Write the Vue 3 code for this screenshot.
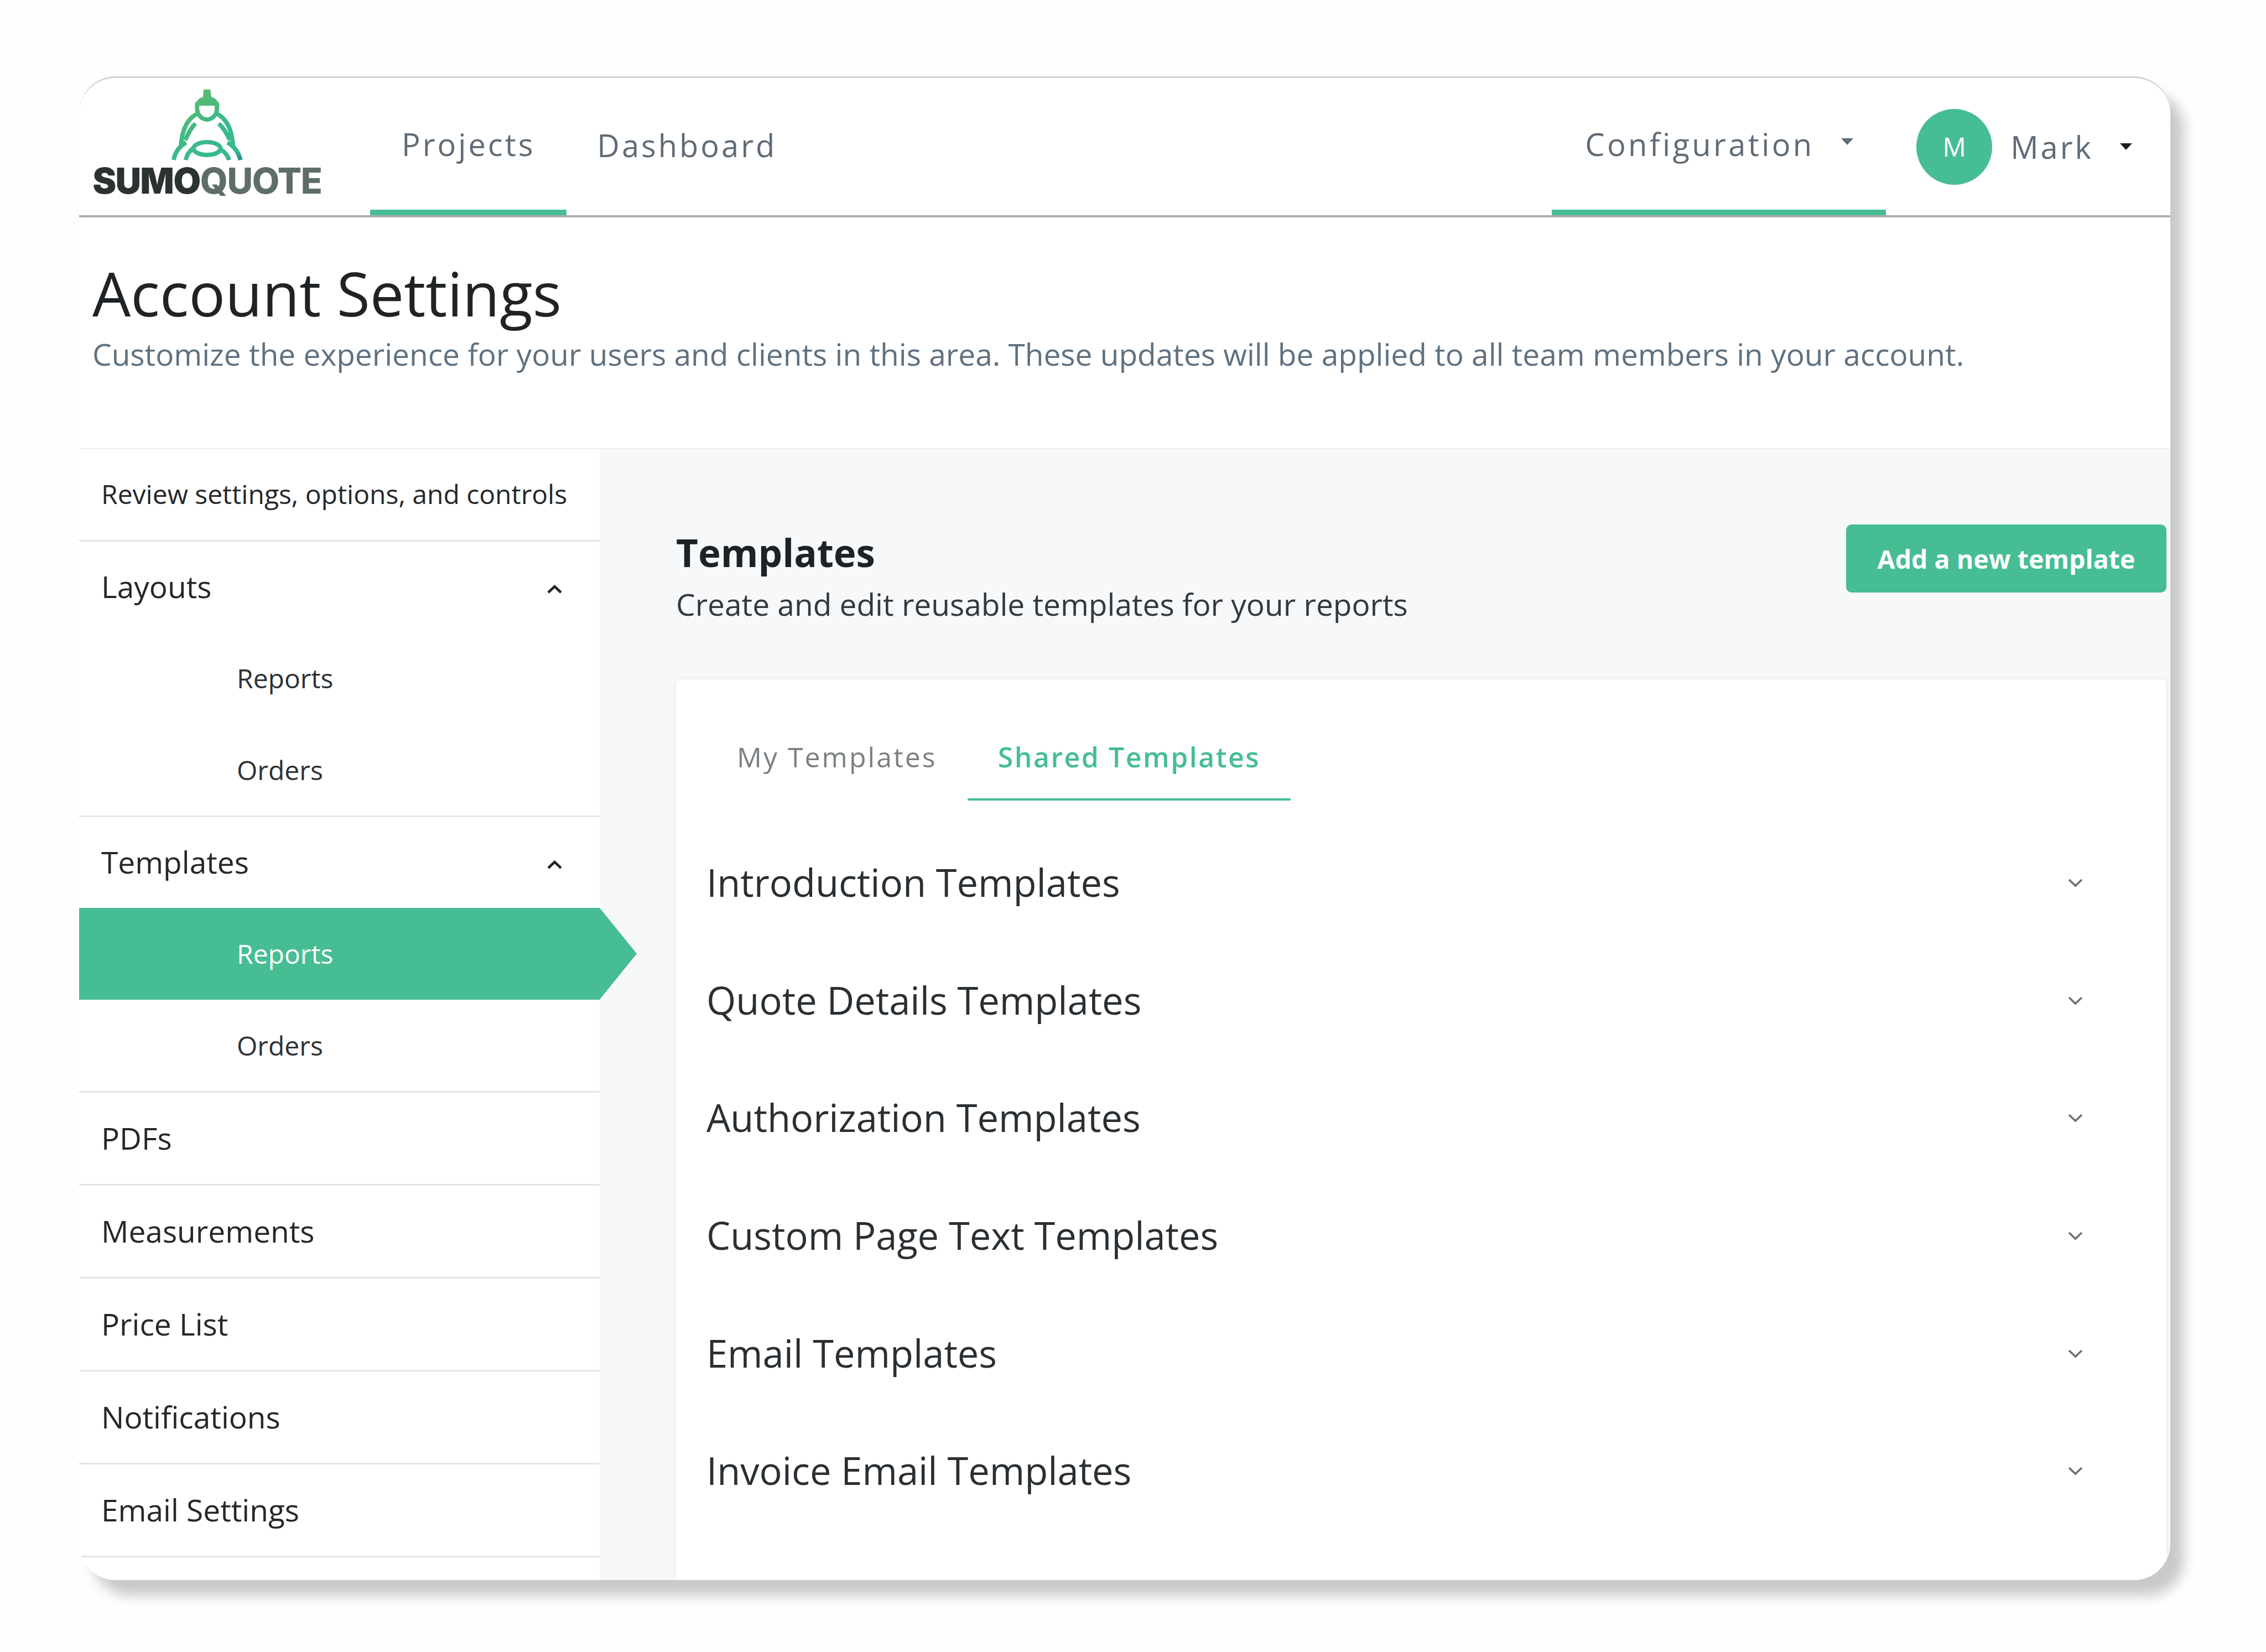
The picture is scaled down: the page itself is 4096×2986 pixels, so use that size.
<script setup>
const layouts = ['Reports', 'Orders']
const templates = [
  { label: 'Reports', active: true },
  { label: 'Orders', active: false },
]
const plainLinks = ['PDFs', 'Measurements', 'Price List', 'Notifications', 'Email Settings']
const accordions = [
  'Introduction Templates',
  'Quote Details Templates',
  'Authorization Templates',
  'Custom Page Text Templates',
  'Email Templates',
  'Invoice Email Templates',
]
</script>

<template>
  <div class="page">
    <div class="window">
      <!-- TOP NAV -->
      <header class="topbar">
        <div class="logo">
          <svg class="logo-mark" viewBox="0 0 215 215" fill="none" stroke="url(#sumo)" stroke-width="13" stroke-linecap="round">
            <defs>
              <linearGradient id="sumo" gradientUnits="userSpaceOnUse" x1="60" y1="0" x2="200" y2="215">
                <stop offset="0" stop-color="#62bc68" />
                <stop offset="0.45" stop-color="#3dba88" />
                <stop offset="0.9" stop-color="#34b98f" />
                <stop offset="1" stop-color="#1f8f8c" />
              </linearGradient>
            </defs>
            <path d="M97 3h20l3 22q20 6 23 26H72q3-20 23-26z" fill="url(#sumo)" stroke="none" />
            <path d="M78 45q-2 22 4 32q10 15 25 15t25-15q6-10 4-32" />
            <path d="M72 78Q36 100 30 165" />
            <path d="M142 78Q178 100 184 165" />
            <path d="M69 108Q56 122 45 148" />
            <path d="M146 108Q160 122 172 148" />
            <ellipse cx="107" cy="178" rx="40" ry="19" />
            <path d="M45 160Q14 178 8 212" stroke-linecap="butt" />
            <path d="M68 175Q48 190 44 212" stroke-linecap="butt" />
            <path d="M168 160Q198 178 206 212" stroke-linecap="butt" />
            <path d="M150 182Q168 195 172 212" stroke-linecap="butt" />
          </svg>
          <div class="logo-text"><span class="sumo">SUMO</span><span class="quote">QUOTE</span></div>
        </div>

        <nav class="nav-left">
          <a class="nav-tab active">Projects</a>
          <a class="nav-tab">Dashboard</a>
        </nav>

        <div class="nav-right">
          <a class="nav-tab active config">Configuration<i class="caret"></i></a>
          <div class="avatar">M</div>
          <span class="user-name">Mark</span>
          <i class="caret dark"></i>
        </div>
      </header>

      <!-- PAGE TITLE -->
      <section class="intro">
        <h1>Account Settings</h1>
        <p>Customize the experience for your users and clients in this area. These updates will be applied to all team members in your account.</p>
      </section>

      <div class="body">
        <!-- SIDEBAR -->
        <aside class="sidebar">
          <div class="side-row small lined">Review settings, options, and controls</div>

          <div class="side-group">
            <div class="side-row">Layouts
              <svg class="chev up" viewBox="0 0 27 16"><path d="M2 14 13.500 3 25 14" /></svg>
            </div>
            <div v-for="item in layouts" :key="item" class="side-sub">{{ item }}</div>
          </div>

          <div class="side-group">
            <div class="side-row">Templates
              <svg class="chev up" viewBox="0 0 27 16"><path d="M2 14 13.500 3 25 14" /></svg>
            </div>
            <div v-for="item in templates" :key="item.label" class="side-sub" :class="{ current: item.active }">{{ item.label }}</div>
          </div>

          <div v-for="item in plainLinks" :key="item" class="side-row lined">{{ item }}</div>
        </aside>

        <!-- MAIN -->
        <main class="main">
          <div class="main-head">
            <div>
              <h2>Templates</h2>
              <p>Create and edit reusable templates for your reports</p>
            </div>
            <button class="add-btn">Add a new template</button>
          </div>

          <div class="card">
            <div class="tabs">
              <div class="tab">My Templates</div>
              <div class="tab selected">Shared Templates</div>
            </div>
            <div class="accordion">
              <div v-for="item in accordions" :key="item" class="acc-row">
                <span>{{ item }}</span>
                <svg class="chev down" viewBox="0 0 27 16"><path d="M2 2 13.500 13 25 2" /></svg>
              </div>
            </div>
          </div>
        </main>
      </div>
    </div>
  </div>
</template>

<style>
html, body {
  margin: 0;
  background: #fefefe;
}
</style>

<style scoped>
* {
  box-sizing: border-box;
}

.page {
  width: 4096px;
  height: 2986px;
  padding: 138px 0 0 143px;
  overflow: hidden;
  font-family: "Open Sans", "Liberation Sans", sans-serif;
  color: #24282b;
}

.window {
  width: 3780px;
  height: 2718px;
  display: flex;
  flex-direction: column;
  background: #fff;
  border-top: 3px solid #d2d2d2;
  border-radius: 66px;
  overflow: hidden;
  box-shadow: 25px 28px 22px #c8cac9;
}

/* TOP NAV */

.topbar {
  height: 252px;
  flex: none;
  display: flex;
  border-bottom: 4px solid #adadad;
}

.logo {
  width: 415px;
  margin-left: 24px;
  padding-top: 19px;
  display: flex;
  flex-direction: column;
  align-items: center;
}

.logo-mark {
  width: 131px;
  height: 131px;
  flex: none;
}

.logo-text {
  margin-top: 6px;
  font-family: Inter, "Liberation Sans", sans-serif;
  font-size: 64px;
  line-height: 60px;
  letter-spacing: -1.300px;
  white-space: nowrap;
}

.sumo {
  font-weight: 900;
  color: #2a3330;
}

.quote {
  font-weight: 800;
  color: #5f6d68;
}

.nav-left {
  margin-left: 87px;
  display: flex;
}

.nav-tab {
  padding: 0 57px;
  display: flex;
  align-items: center;
  font-size: 56px;
  letter-spacing: 4px;
  color: #5f6b76;
  white-space: nowrap;
  border-bottom: 10px solid transparent;
}

.nav-tab + .nav-tab {
  padding: 4px 57px 0 55px;
}

.nav-tab.active {
  border-bottom-color: #47bd93;
}

.nav-right {
  margin-left: auto;
  display: flex;
  align-items: center;
}

.nav-tab.config {
  align-self: stretch;
  width: 604px;
  padding: 0 0 0 60px;
  letter-spacing: 4.400px;
}

.caret {
  margin-left: 48px;
  margin-top: -8px;
  border-top: 12px solid #5f6b76;
  border-left: 11px solid transparent;
  border-right: 11px solid transparent;
}

.caret.dark {
  margin: 0 69px 0 48px;
  border-top-color: #1d1d1d;
}

.avatar {
  width: 137px;
  height: 137px;
  margin-left: 55px;
  border-radius: 50%;
  background: #47bd93;
  color: #fff;
  font-size: 47px;
  display: flex;
  align-items: center;
  justify-content: center;
}

.user-name {
  margin-left: 33px;
  font-size: 56px;
  letter-spacing: 4px;
  color: #5f6b76;
}

/* PAGE TITLE */

.intro {
  height: 419px;
  flex: none;
  padding: 72px 0 0 24px;
  border-bottom: 2px solid #eceef0;
}

.intro h1 {
  margin: 0;
  font-size: 109.500px;
  line-height: 130px;
  font-weight: 400;
  color: #1f2326;
}

.intro p {
  margin: 3px 0 0;
  font-size: 55px;
  line-height: 84px;
  color: #5f7180;
  white-space: nowrap;
}

/* SIDEBAR */

.body {
  flex: 1;
  min-height: 0;
  display: flex;
}

.sidebar {
  width: 941px;
  flex: none;
  background: #fff;
}

.side-row {
  height: 168px;
  padding: 0 68px 3px 40px;
  display: flex;
  align-items: center;
  justify-content: space-between;
  font-size: 55px;
  color: #24282b;
  white-space: nowrap;
}

.side-row.lined,
.side-group {
  border-bottom: 3px solid #e3e5e7;
}

.side-row.small {
  height: 167px;
  font-size: 48px;
}

.side-group .side-row {
  height: 164px;
}

.side-sub {
  height: 165.500px;
  padding-left: 285px;
  display: flex;
  align-items: center;
  font-size: 48px;
  color: #2d3135;
}

.side-sub.current {
  position: relative;
  background: #47bd93;
  color: #fff;
}

.side-sub.current::after {
  content: "";
  position: absolute;
  left: 100%;
  top: 0;
  width: 67px;
  height: 100%;
  background: #47bd93;
  clip-path: polygon(0 0, 100% 50%, 0 100%);
}

.chev {
  width: 27px;
  height: 16px;
  flex: none;
  fill: none;
}

.chev.up {
  margin-top: 10px;
  stroke: #222;
  stroke-width: 4.500;
}

.chev.down {
  margin-top: 3px;
  stroke: #6d6d6d;
  stroke-width: 3.500;
}

/* MAIN */

.main {
  flex: 1;
  min-width: 0;
  display: flex;
  flex-direction: column;
  padding: 136px 7px 0 138px;
  background: #f7f8fa;
}

.main-head {
  display: flex;
  justify-content: space-between;
  align-items: flex-start;
}

.main-head h2 {
  margin: -2px 0 0;
  font-size: 69px;
  line-height: 104px;
  font-weight: 700;
  color: #1e2225;
}

.main-head p {
  margin: 0;
  font-size: 55px;
  line-height: 84px;
  color: #33383c;
}

.add-btn {
  width: 579px;
  height: 123px;
  border: none;
  border-radius: 10px;
  background: #47bd93;
  color: #fff;
  font-family: inherit;
  font-size: 46.500px;
  font-weight: 700;
}

.card {
  flex: 1;
  margin-top: 94px;
  padding: 61px 0 0 55px;
  background: #fff;
  border-radius: 10px 10px 0 0;
  box-shadow: 0 0 8px #e3e6ea;
}

.tabs {
  display: flex;
}

.tab {
  height: 158px;
  padding: 4px 55px 0;
  display: flex;
  align-items: center;
  font-size: 50px;
  letter-spacing: 3px;
  color: #7b8084;
  border-bottom: 4px solid transparent;
}

.tab.selected {
  font-weight: 600;
  letter-spacing: 2.500px;
  color: #47bd93;
  border-bottom-color: #47bd93;
}

.accordion {
  margin-top: 41px;
}

.acc-row {
  height: 212.700px;
  padding-right: 151px;
  display: flex;
  align-items: center;
  justify-content: space-between;
  font-size: 68.600px;
  color: #2a2f33;
}
</style>
